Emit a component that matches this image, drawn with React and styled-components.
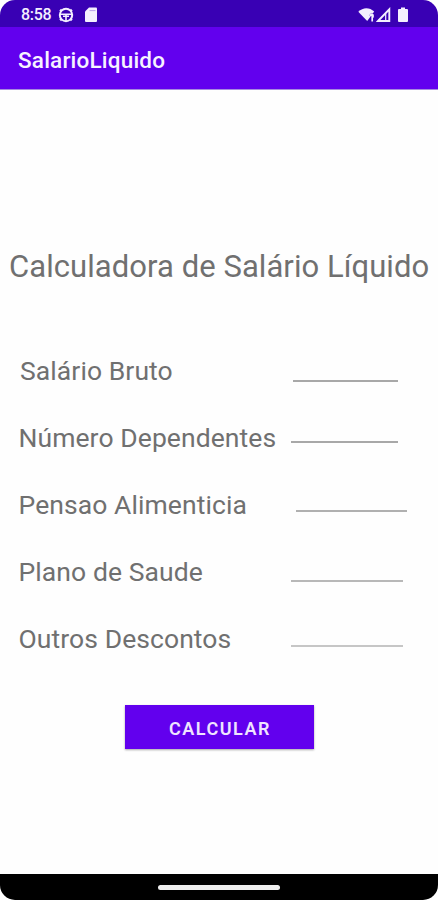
import React from 'react';
import styled, { createGlobalStyle } from 'styled-components';

const GlobalStyle = createGlobalStyle`
  *, *::before, *::after { box-sizing: border-box; }
  body { margin: 0; background: #fff; font-family: Roboto, sans-serif; }
`;

const Screen = styled.div`
  width: 438px;
  height: 900px;
  display: flex;
  flex-direction: column;
  background: #fefefe;
  overflow: hidden;
`;

const StatusArea = styled.div`
  background: #fff;
`;

const StatusBar = styled.div`
  height: 27px;
  padding: 2px 29px 0 21px;
  display: flex;
  align-items: center;
  background: #3900b4;
  border-radius: 15px 15px 0 0;
  color: #f4efff;
`;

const Clock = styled.span`
  width: 37px;
  font-size: 16px;
  font-weight: 500;
  line-height: 24px;
  letter-spacing: -0.3px;
  white-space: nowrap;
`;

const StatusIcon = styled.svg`
  display: block;
  flex: none;
  margin-left: ${(p) => p.$gap || 0}px;
`;

const Spacer = styled.div`
  flex: 1;
`;

const AppBar = styled.header`
  height: 63px;
  padding: 3px 18px 0;
  display: flex;
  align-items: center;
  background: #6200ee;
  border-bottom: 1px solid #a78ae0;
`;

const AppTitle = styled.h1`
  margin: 0;
  color: #f7f2ff;
  font-size: 22.5px;
  font-weight: 500;
  line-height: 30px;
  letter-spacing: 0.2px;
  white-space: nowrap;
`;

const Content = styled.main`
  flex: 1;
  display: flex;
  flex-direction: column;
  padding-top: 156px;
`;

const Heading = styled.h2`
  margin: 0 0 0 9px;
  height: 42px;
  color: #707070;
  font-size: 31px;
  font-weight: 400;
  line-height: 42px;
  letter-spacing: 0.06px;
  white-space: nowrap;
`;

const Form = styled.form`
  margin-top: 50px;
  display: flex;
  flex-direction: column;
`;

const Row = styled.div`
  height: 67px;
  padding-left: ${(p) => p.$indent}px;
  padding-right: ${(p) => p.$end}px;
  display: flex;
  justify-content: space-between;
  align-items: flex-start;
`;

const Label = styled.label`
  color: #707070;
  font-size: 26.5px;
  font-weight: 400;
  line-height: 65px;
  letter-spacing: 0.08px;
  white-space: nowrap;
`;

const Field = styled.input`
  width: ${(p) => p.$width}px;
  height: ${(p) => p.$height}px;
  padding: 0;
  border: 0;
  border-bottom: 2px solid ${(p) => p.$line};
  border-radius: 0;
  outline: 0;
  background: transparent;
  color: #444;
  font: 20px Roboto, sans-serif;
`;

const Submit = styled.button`
  align-self: center;
  width: 189px;
  height: 44px;
  margin: 32px 0 0;
  padding: 3px 0 0 2px;
  border: 0;
  background: #6200ee;
  box-shadow: 0 1px 2px rgba(0, 0, 0, 0.35);
  color: #efe4ff;
  font: 600 18px/24px Roboto, sans-serif;
  letter-spacing: 1.5px;
`;

const NavArea = styled.div`
  background: #fff;
`;

const NavBar = styled.footer`
  height: 26px;
  display: flex;
  justify-content: center;
  align-items: center;
  background: #000;
  border-radius: 0 0 15px 15px;
`;

const HomeHandle = styled.div`
  width: 122px;
  height: 5px;
  border-radius: 3px;
  background: #eee;
`;

const fields = [
  { id: 'bruto', label: 'Salário Bruto', indent: 20, end: 40, width: 105, height: 44, line: '#a8a8a8' },
  { id: 'dependentes', label: 'Número Dependentes', indent: 18.5, end: 40, width: 107, height: 38, line: '#a8a8a8' },
  { id: 'pensao', label: 'Pensao Alimenticia', indent: 18.5, end: 31, width: 111, height: 40, line: '#b0b0b0' },
  { id: 'saude', label: 'Plano de Saude', indent: 18.5, end: 35, width: 112, height: 43, line: '#b8b8b8' },
  { id: 'outros', label: 'Outros Descontos', indent: 18.5, end: 35, width: 112, height: 41, line: '#c6c6c6' },
];

export default function App() {
  return (
    <>
      <GlobalStyle />
      <Screen>
        <StatusArea>
          <StatusBar>
            <Clock>8:58</Clock>
            <StatusIcon width="16" height="16" viewBox="0 0 16 16" fill="none" stroke="currentColor">
              <circle cx="8" cy="8" r="6.2" strokeWidth="2" />
              <path d="M2 7.3h12M5 9.2h6M8 8v6" strokeWidth="1.6" />
              <path d="M3.5 2.3 1.8 4M12.5 2.3 14.2 4M3.5 13.7 1.8 12M12.5 13.7l1.7-1.7" strokeWidth="1.3" />
            </StatusIcon>
            <StatusIcon $gap={10} width="14" height="16" viewBox="0 0 14 16">
              <path d="M5 .5h7q1 0 1 1v12.5q0 1-1 1H2q-1 0-1-1V4.5z" fill="currentColor" />
              <path d="M5.5 3.6h6" stroke="#b9a0e8" strokeWidth="1" />
            </StatusIcon>
            <Spacer />
            <StatusIcon width="18" height="16" viewBox="0 0 18 16">
              <path d="M.3 4.8C5 0 11.5 0 16.2 4.6L9.2 14z" fill="currentColor" />
              <path d="M11.4 8.2q1.6-2.4 3.8-1.4" fill="none" stroke="#3900b4" strokeWidth="0.6" />
              <path d="M12.2 8.4q1.6-1.8 2.8-.4v2l-1.3 1.2M14.2 7.5V14.5" fill="none" stroke="currentColor" strokeWidth="1.7" />
            </StatusIcon>
            <StatusIcon width="15" height="16" viewBox="0 0 15 16">
              <path d="M2 14 13.3 2.3V14z" fill="none" stroke="currentColor" strokeWidth="1.9" />
              <path d="M9.7 6.8v7" stroke="currentColor" strokeWidth="1.2" />
            </StatusIcon>
            <StatusIcon $gap={6} width="12" height="16" viewBox="0 0 12 16">
              <path d="M4 .5h4V2h2q1 0 1 1v11q0 1-1 1H2q-1 0-1-1V3q0-1 1-1h2z" fill="currentColor" />
            </StatusIcon>
          </StatusBar>
        </StatusArea>
        <AppBar>
          <AppTitle>SalarioLiquido</AppTitle>
        </AppBar>
        <Content>
          <Heading>Calculadora de Salário Líquido</Heading>
          <Form onSubmit={(e) => e.preventDefault()}>
            {fields.map((f) => (
              <Row key={f.id} $indent={f.indent} $end={f.end}>
                <Label htmlFor={f.id}>{f.label}</Label>
                <Field id={f.id} $width={f.width} $height={f.height} $line={f.line} />
              </Row>
            ))}
            <Submit type="submit">CALCULAR</Submit>
          </Form>
        </Content>
        <NavArea>
          <NavBar>
            <HomeHandle />
          </NavBar>
        </NavArea>
      </Screen>
    </>
  );
}
